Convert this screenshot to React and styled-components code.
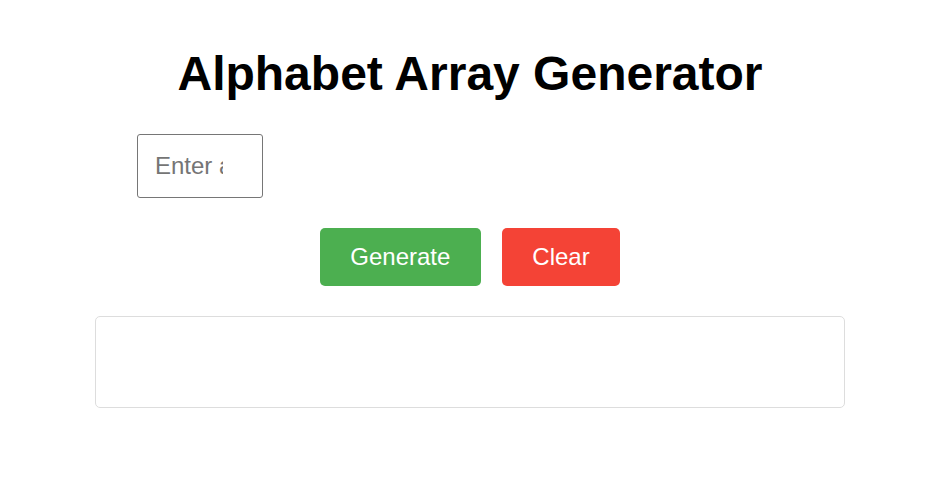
import React, { useState } from "react";
import styled, { createGlobalStyle } from "styled-components";

const GlobalStyle = createGlobalStyle`
  body {
    margin: 0;
    padding: 0 14px 0 8px;
    background: #fff;
    font-family: "Liberation Sans", Arial, sans-serif;
  }
`;

const SCWrapper = styled.div`
  max-width: 750px;
  margin: 0 auto;
  padding-top: 46px;
`;

const SCTitle = styled.h1`
  margin: 0 0 32px;
  text-align: center;
  font-size: 48px;
  font-weight: bold;
  line-height: 56px;
  color: #000;
`;

const SCInputRow = styled.div`
  padding-left: 42px;
`;

const SCInput = styled.input`
  box-sizing: border-box;
  width: 126px;
  height: 64px;
  padding: 0 24px 0 17px;
  font-family: inherit;
  font-size: 24px;
  color: #333;
  border: 1px solid #767676;
  border-radius: 3px;
  outline: none;

  &::placeholder {
    color: #757575;
  }
`;

const SCButtonRow = styled.div`
  display: flex;
  justify-content: center;
  gap: 21px;
  margin-top: 30px;
`;

const SCButton = styled.button`
  height: 58px;
  padding: 0 30.5px;
  font-family: inherit;
  font-size: 24px;
  color: #fff;
  background-color: ${(props) => (props.danger ? "#f44336" : "#4caf50")};
  border: none;
  border-radius: 5px;
  cursor: pointer;
`;

const SCOutput = styled.div`
  box-sizing: border-box;
  height: 92px;
  margin-top: 30px;
  padding: 16px;
  border: 1px solid #ddd;
  border-radius: 5px;
  font-size: 18px;
`;

function App() {
  const [value, setValue] = useState("");
  const [result, setResult] = useState("");

  function generate() {
    const n = parseInt(value, 10);
    if (!n || n < 1) return;
    const letters = [];
    for (let i = 0; i < Math.min(n, 26); i++) {
      letters.push(String.fromCharCode(65 + i));
    }
    setResult(JSON.stringify(letters));
  }

  return (
    <>
      <GlobalStyle />
      <SCWrapper>
        <SCTitle>Alphabet Array Generator</SCTitle>
        <SCInputRow>
          <SCInput
            type="number"
            placeholder="Enter a number"
            value={value}
            onChange={(e) => setValue(e.target.value)}
          />
        </SCInputRow>
        <SCButtonRow>
          <SCButton onClick={generate}>Generate</SCButton>
          <SCButton
            danger
            onClick={() => {
              setValue("");
              setResult("");
            }}
          >
            Clear
          </SCButton>
        </SCButtonRow>
        <SCOutput>{result}</SCOutput>
      </SCWrapper>
    </>
  );
}

export default App;
